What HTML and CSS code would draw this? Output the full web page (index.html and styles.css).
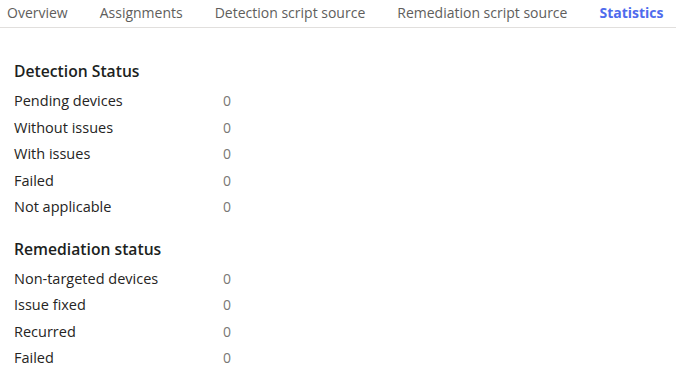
FILE: index.html
```html
<!DOCTYPE html>
<html>
<head>
<meta charset="utf-8">
<link rel="stylesheet" href="styles.css">
</head>
<body>
<nav class="tabs">
  <span class="tab">Overview</span>
  <span class="tab">Assignments</span>
  <span class="tab">Detection script source</span>
  <span class="tab">Remediation script source</span>
  <span class="tab active">Statistics</span>
</nav>
<main class="content">
  <section class="group">
    <h2 class="heading">Detection Status</h2>
    <div class="row"><span class="label">Pending devices</span><span class="value">0</span></div>
    <div class="row"><span class="label">Without issues</span><span class="value">0</span></div>
    <div class="row"><span class="label">With issues</span><span class="value">0</span></div>
    <div class="row"><span class="label">Failed</span><span class="value">0</span></div>
    <div class="row"><span class="label">Not applicable</span><span class="value">0</span></div>
  </section>
  <section class="group">
    <h2 class="heading">Remediation status</h2>
    <div class="row"><span class="label">Non-targeted devices</span><span class="value">0</span></div>
    <div class="row"><span class="label">Issue fixed</span><span class="value">0</span></div>
    <div class="row"><span class="label">Recurred</span><span class="value">0</span></div>
    <div class="row"><span class="label">Failed</span><span class="value">0</span></div>
  </section>
</main>
</body>
</html>
```
FILE: styles.css
```css
* { box-sizing: border-box; }
html, body { margin: 0; padding: 0; background: #fff; }
body {
  font-family: "Open Sans", "Noto Sans", sans-serif;
  font-size: 14px;
  color: #323130;
  width: 676px;
  height: 379px;
  overflow: hidden;
}
.tabs {
  display: flex;
  gap: 32px;
  padding-left: 7px;
  height: 28px;
  border-bottom: 1px solid #e1dfdd;
  align-items: center;
  white-space: nowrap;
}
.tab {
  color: #605e5c;
  font-size: 14px;
  line-height: 20px;
  padding-bottom: 2px;
}
.tab.active {
  color: #4f6bed;
  font-weight: 700;
}
.content {
  padding: 31px 0 0 14px;
}
.group { margin-bottom: 16px; }
.heading {
  margin: 0 0 5px;
  font-size: 15.7px;
  font-weight: 600;
  line-height: 24px;
  color: #201f1e;
}
.row {
  display: grid;
  grid-template-columns: 209px auto;
  height: 26.5px;
  line-height: 26.5px;
  font-size: 14.5px;
}
.label { color: #252423; }
.value { color: #797775; font-size: 14px; }
```
